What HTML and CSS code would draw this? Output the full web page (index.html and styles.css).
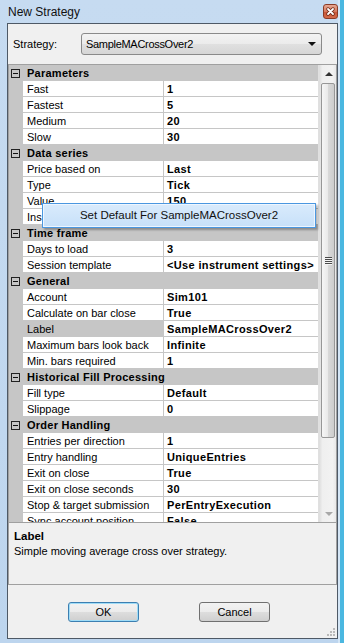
FILE: index.html
```html
<!DOCTYPE html>
<html lang="en">
<head>
    <meta charset="UTF-8">
    <meta name="viewport" content="width=device-width, initial-scale=1.0">
    <title>New Strategy</title>
    <link rel="stylesheet" href="styles.css">
</head>
<body>
    <div class="window">
        <div class="titlebar">
            <span class="title">New Strategy</span>
            <span class="close-btn">
                <svg width="13" height="13" viewBox="0 0 13 13">
                    <path d="M4 4 L9 9 M9 4 L4 9" stroke="#6b2614" stroke-width="3.4" stroke-linecap="round"/>
                    <path d="M4 4 L9 9 M9 4 L4 9" stroke="#fff" stroke-width="1.8" stroke-linecap="round"/>
                </svg>
            </span>
        </div>

        <div class="client">
            <div class="strategy-row">
                <span class="strategy-label">Strategy:</span>
                <div class="combo">
                    <span class="combo-text">SampleMACrossOver2</span>
                    <span class="combo-arrow"></span>
                </div>
            </div>

            <div class="grid">
                <div class="grid-rows">
                    <div class="category"><span class="toggle"></span>Parameters</div>
                    <div class="prop"><span class="name">Fast</span><span class="value">1</span></div>
                    <div class="prop"><span class="name">Fastest</span><span class="value">5</span></div>
                    <div class="prop"><span class="name">Medium</span><span class="value">20</span></div>
                    <div class="prop"><span class="name">Slow</span><span class="value">30</span></div>

                    <div class="category"><span class="toggle"></span>Data series</div>
                    <div class="prop"><span class="name">Price based on</span><span class="value">Last</span></div>
                    <div class="prop"><span class="name">Type</span><span class="value">Tick</span></div>
                    <div class="prop"><span class="name">Value</span><span class="value">150</span></div>
                    <div class="prop"><span class="name">Ins</span><span class="value"></span></div>

                    <div class="category"><span class="toggle"></span>Time frame</div>
                    <div class="prop"><span class="name">Days to load</span><span class="value">3</span></div>
                    <div class="prop"><span class="name">Session template</span><span class="value">&lt;Use instrument settings&gt;</span></div>

                    <div class="category"><span class="toggle"></span>General</div>
                    <div class="prop"><span class="name">Account</span><span class="value">Sim101</span></div>
                    <div class="prop"><span class="name">Calculate on bar close</span><span class="value">True</span></div>
                    <div class="prop selected"><span class="name">Label</span><span class="value">SampleMACrossOver2</span></div>
                    <div class="prop"><span class="name">Maximum bars look back</span><span class="value">Infinite</span></div>
                    <div class="prop"><span class="name">Min. bars required</span><span class="value">1</span></div>

                    <div class="category"><span class="toggle"></span>Historical Fill Processing</div>
                    <div class="prop"><span class="name">Fill type</span><span class="value">Default</span></div>
                    <div class="prop"><span class="name">Slippage</span><span class="value">0</span></div>

                    <div class="category"><span class="toggle"></span>Order Handling</div>
                    <div class="prop"><span class="name">Entries per direction</span><span class="value">1</span></div>
                    <div class="prop"><span class="name">Entry handling</span><span class="value">UniqueEntries</span></div>
                    <div class="prop"><span class="name">Exit on close</span><span class="value">True</span></div>
                    <div class="prop"><span class="name">Exit on close seconds</span><span class="value">30</span></div>
                    <div class="prop"><span class="name">Stop &amp; target submission</span><span class="value">PerEntryExecution</span></div>
                    <div class="prop"><span class="name">Sync account position</span><span class="value">False</span></div>
                </div>

                <div class="scrollbar">
                    <div class="sb-btn"><span class="arrow-up"></span></div>
                    <div class="sb-thumb">
                        <span class="grip"></span>
                    </div>
                    <div class="sb-track"></div>
                    <div class="sb-btn"><span class="arrow-down"></span></div>
                </div>
            </div>

            <div class="help">
                <div class="help-title">Label</div>
                <div class="help-text">Simple moving average cross over strategy.</div>
            </div>

            <div class="buttons">
                <button class="btn default">OK</button>
                <button class="btn">Cancel</button>
            </div>

            <svg class="size-grip" width="10" height="10" viewBox="0 0 10 10">
                <rect x="7" y="1" width="2" height="2" fill="#b9b9b9"/>
                <rect x="4" y="4" width="2" height="2" fill="#b9b9b9"/>
                <rect x="7" y="4" width="2" height="2" fill="#b9b9b9"/>
                <rect x="1" y="7" width="2" height="2" fill="#b9b9b9"/>
                <rect x="4" y="7" width="2" height="2" fill="#b9b9b9"/>
                <rect x="7" y="7" width="2" height="2" fill="#b9b9b9"/>
            </svg>
        </div>

        <div class="context-menu">Set Default For SampleMACrossOver2</div>
    </div>
</body>
</html>
```

FILE: styles.css
```css
* {
    box-sizing: border-box;
}
body {
    margin: 0;
    font-family: "Liberation Sans", Arial, sans-serif;
    font-size: 11px;
    color: #000;
}
.window {
    position: relative;
    width: 344px;
    height: 643px;
    display: flex;
    flex-direction: column;
    background: linear-gradient(#c6dbf1, #bdd5ee);
    box-shadow: inset -4px 0 0 #4ab7e0, inset -6px 0 0 #d4e6f6;
    overflow: hidden;
}
.titlebar {
    height: 23px;
    flex: none;
    display: flex;
    align-items: center;
    padding-left: 8px;
}
.title {
    font-size: 12px;
    color: #111;
}
.close-btn {
    margin-left: auto;
    margin-right: 6px;
    width: 15px;
    height: 15px;
    border: 1px solid #8b3b26;
    border-radius: 3px;
    background: linear-gradient(#e6a792, #d67a5f 50%, #c65537 51%, #d46a4a);
    display: flex;
    align-items: center;
    justify-content: center;
}
.close-btn svg {
    display: block;
}

.client {
    position: relative;
    flex: 1;
    margin: 0 6px 4px 7px;
    border: 1px solid #4e5966;
    background: #f0f0f0;
    display: flex;
    flex-direction: column;
}

.strategy-row {
    display: flex;
    align-items: center;
    padding: 9px 0 0 5px;
}
.strategy-label {
    width: 68px;
    font-size: 11px;
}
.combo {
    width: 241px;
    height: 22px;
    border: 1px solid #8a8a8a;
    border-radius: 3px;
    background: linear-gradient(#f3f3f3, #ebebeb 50%, #e0e0e0 51%, #d6d6d6);
    display: flex;
    align-items: center;
    padding: 0 5px 0 4px;
}
.combo-text {
    flex: 1;
    font-size: 11px;
    letter-spacing: -0.3px;
}
.combo-arrow {
    width: 0;
    height: 0;
    border-left: 4px solid transparent;
    border-right: 4px solid transparent;
    border-top: 4px solid #111;
}

.grid {
    margin-top: 9px;
    height: 459px;
    flex: none;
    border: 1px solid #a0a0a0;
    display: flex;
    background: #fff;
}
.grid-rows {
    width: 309px;
    flex: none;
    overflow: hidden;
}
.category {
    height: 16px;
    background: #c6c6c6;
    display: flex;
    align-items: center;
    padding-left: 2px;
    font-weight: bold;
    letter-spacing: 0.25px;
    line-height: 16px;
}
.toggle {
    position: relative;
    width: 9px;
    height: 9px;
    border: 1px solid #222;
    margin-right: 7px;
    background: #c6c6c6;
}
.toggle::after {
    content: "";
    position: absolute;
    left: 1px;
    top: 3px;
    width: 5px;
    height: 1px;
    background: #111;
}
.prop {
    height: 16px;
    display: flex;
    padding-left: 14px;
    background: #c6c6c6;
    line-height: 16px;
    white-space: nowrap;
}
.prop .name {
    width: 141px;
    flex: none;
    background: #fff;
    border-right: 1px solid #c6c6c6;
    border-bottom: 1px solid #c6c6c6;
    padding-left: 4px;
    overflow: hidden;
}
.prop .value {
    flex: 1;
    background: #fff;
    border-bottom: 1px solid #c6c6c6;
    padding-left: 3px;
    font-weight: bold;
    letter-spacing: 0.35px;
    overflow: hidden;
}
.prop.selected .name {
    background: #c6c6c6;
}

.scrollbar {
    width: 18px;
    flex: none;
    display: flex;
    flex-direction: column;
    background: linear-gradient(to right, #dcdcdc, #efefef 20%, #f2f2f2 80%, #e8e8e8);
    border-left: 1px solid #e0e0e0;
}
.sb-btn {
    height: 17px;
    flex: none;
    display: flex;
    align-items: center;
    justify-content: center;
    padding-left: 2px;
}
.arrow-up {
    width: 0;
    height: 0;
    border-left: 4px solid transparent;
    border-right: 4px solid transparent;
    border-bottom: 4px solid #333;
}
.arrow-down {
    width: 0;
    height: 0;
    border-left: 4px solid transparent;
    border-right: 4px solid transparent;
    border-top: 4px solid #a8a8a8;
}
.sb-thumb {
    margin: 1px 0 0 2px;
    width: 14px;
    height: 355px;
    flex: none;
    border: 1px solid #979797;
    border-radius: 2px;
    background: linear-gradient(to right, #f6f6f6, #e9e9e9 50%, #d9d9d9 51%, #cdcdcd);
    display: flex;
    align-items: center;
    justify-content: center;
}
.grip {
    width: 7px;
    height: 8px;
    background: repeating-linear-gradient(#4a4a4a 0, #4a4a4a 1px, #f4f4f4 1px, #f4f4f4 2px);
}
.sb-track {
    flex: 1;
}

.help {
    height: 62px;
    flex: none;
    border: 1px solid #a0a0a0;
    border-top: none;
    padding: 6px 5px 0;
    line-height: 15px;
}
.help-title {
    font-weight: bold;
    font-size: 11.5px;
}

.buttons {
    display: flex;
    gap: 60px;
    padding-left: 60px;
    margin-top: 17px;
}
.btn {
    width: 71px;
    height: 20px;
    border: 1px solid #707070;
    border-radius: 3px;
    background: linear-gradient(#f2f2f2, #ebebeb 50%, #dddddd 51%, #cfcfcf);
    font-family: "Liberation Sans", Arial, sans-serif;
    font-size: 11px;
    color: #000;
    padding: 0;
}
.btn.default {
    border-color: #3c7fb1;
    box-shadow: inset 0 0 0 1px #9fdcf7;
}

.size-grip {
    position: absolute;
    right: 1px;
    bottom: 1px;
}

.context-menu {
    position: absolute;
    left: 42px;
    top: 203px;
    width: 274px;
    height: 25px;
    border: 1px solid #4a97e0;
    background: linear-gradient(#d9ebfc, #c7e0f9);
    box-shadow: inset 0 0 0 1px #eef6ff, 2px 2px 2px rgba(0, 0, 0, 0.3);
    text-align: center;
    line-height: 23px;
    font-size: 11.5px;
    color: #111;
}
```
